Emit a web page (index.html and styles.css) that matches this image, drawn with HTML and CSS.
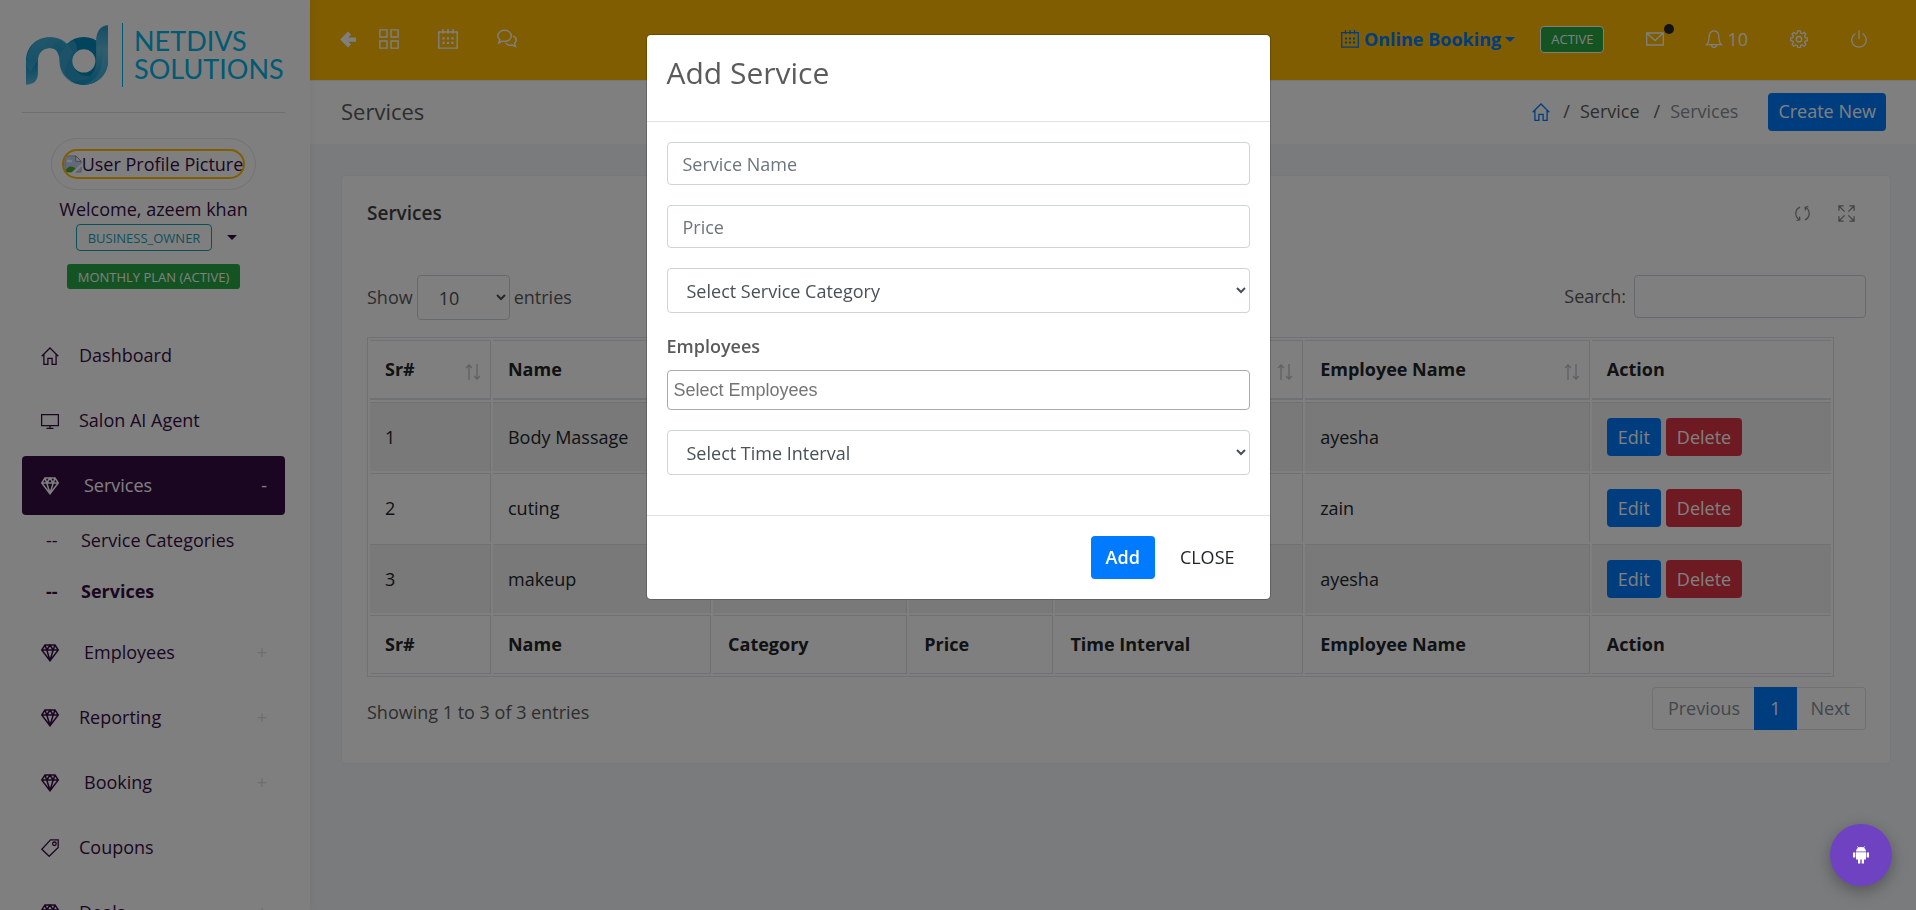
FILE: index.html
```html
<!DOCTYPE html>
<html lang="en">
<head>
<meta charset="utf-8">
<meta name="viewport" content="width=device-width, initial-scale=1">
<title>Services</title>
<link rel="stylesheet" href="styles.css">
</head>
<body>
<svg class="sprite" aria-hidden="true">
  <symbol id="i-home" viewBox="0 0 18 18"><path d="M.7 9.3 9 1l8.300 8.300M2.900 7.500v9.800h4v-6h4.200v6h4V7.500" /></symbol>
  <symbol id="i-desktop" viewBox="0 0 18 18"><path d="M.6 2.600h16.800v11H.6zM9 13.600v2.800M5.500 16.400h7" /></symbol>
  <symbol id="i-diamond" viewBox="0 0 18 18"><path d="M4 1h10l3.300 5L9 16.800.7 6zM.7 6h16.600M4 1l1.800 5L9 16.500 12.200 6 14 1M5.800 6 9 1l3.200 5" stroke-width="1.500" /></symbol>
  <symbol id="i-tag" viewBox="0 0 18 18"><path d="M9.500.8h7.700v7.700L8.200 17.300.8 10.300z" /><circle cx="13.400" cy="4.800" r="1.800" /></symbol>
  <symbol id="i-grid" viewBox="0 0 18 18"><path d="M.8.800h6.400v6.400H.8zM10.800.800h6.400v6.400h-6.400zM.8 10.800h6.400v6.400H.8zM10.800 10.800h6.400v6.400h-6.400z" /></symbol>
  <symbol id="i-calendar" viewBox="0 0 18 18"><path d="M.7 2.700h16.600v14.500H.7zM4.500 0v4.200M9 0v4.200M13.500 0v4.200" /><path d="M4 8.500h2M8 8.500h2M12 8.500h2M4 12.500h2M8 12.500h2M12 12.500h2" stroke-width="2" /></symbol>
  <symbol id="i-chat" viewBox="0 0 18 18"><path d="M6.800 1.200c3.400 0 6.100 2.200 6.100 5s-2.700 5-6.100 5c-.7 0-1.400-.1-2-.3L1.600 12.600l.9-3C1.300 8.700.700 7.500.700 6.200c0-2.800 2.700-5 6.100-5zM14.500 6.200c1.700.7 2.800 2.100 2.800 3.700 0 1.200-.5 2.200-1.500 3l.8 2.800-3-1.300c-2.300.5-4.600-.3-5.700-1.700" /></symbol>
  <symbol id="i-mail" viewBox="0 0 18 18"><path d="M.7 3h16.600v12H.7zM.9 3.200 9 10.500l8.100-7.300" /></symbol>
  <symbol id="i-bell" viewBox="0 0 18 18"><path d="M1.500 14.700c2.200-1.500 2.500-3.200 2.500-7C4 3.500 6 .800 9 .800s5 2.700 5 6.900c0 3.800.3 5.500 2.500 7zM6.500 15c0 1.500 1.100 2.400 2.500 2.400s2.500-.9 2.500-2.400" /></symbol>
  <symbol id="i-gear" viewBox="0 0 18 18"><path d="M7.700.800h2.600l.4 2.300 1.500.6 1.900-1.300 1.800 1.800-1.300 1.900.6 1.500 2.200.4v2.600l-2.200.4-.6 1.500 1.300 1.900-1.800 1.800-1.900-1.300-1.500.6-.4 2.200H7.700l-.4-2.200-1.500-.6-1.900 1.300-1.800-1.800 1.300-1.900-.6-1.500-2.200-.4V8l2.200-.4.6-1.500-1.300-1.900 1.800-1.800 1.900 1.300 1.500-.6z" /><circle cx="9" cy="9.200" r="2.700" /></symbol>
  <symbol id="i-power" viewBox="0 0 18 18"><path d="M5.500 3.500A7.300 7.300 0 1 0 12.500 3.500M9 .300V9" /></symbol>
  <symbol id="i-reload" viewBox="0 0 18 18"><path d="M6.500 2.300A7.200 7.200 0 0 0 5.800 15.400M11.500 15.700A7.200 7.200 0 0 0 12.200 2.600M2.800 16.200l3.400-.5-.4-3.400M15.200 1.800l-3.400.5.4 3.400" /></symbol>
  <symbol id="i-expand" viewBox="0 0 18 18"><path d="M1 6V1h5M1 1l6 6M12 1h5v5M17 1l-6 6M1 12v5h5M1 17l6-6M17 12v5h-5M17 17l-6-6" /></symbol>
  <symbol id="i-sort" viewBox="0 0 18 18"><path d="M5 17V2M2 5l3-3 3 3M13 1v15M10 13l3 3 3-3" /></symbol>
</svg>

<div class="layout">
  <aside class="sidebar">
    <a class="brand" href="#">
      <svg class="brand-mark" viewBox="0 0 84 62" aria-hidden="true">
        <defs>
          <linearGradient id="g1" x1="0" y1="0" x2="0" y2="1"><stop offset="0" stop-color="#2fa5d0"/><stop offset=".5" stop-color="#0090c4"/><stop offset="1" stop-color="#5cb9de"/></linearGradient>
          <linearGradient id="g2" x1="0" y1="0" x2="0" y2="1"><stop offset="0" stop-color="#2a9cc9"/><stop offset=".4" stop-color="#5fb8dc"/><stop offset="1" stop-color="#0e97c8"/></linearGradient>
        </defs>
        <path d="M0 61V37C0 23 10 13 24 13c9 0 15 4 19 9l-3 26c-4-4-6-9-6-13-1-7-4-11-10-11-7 0-12 5-12 13v12C12 57 8 61 0 61z" fill="url(#g1)"/>
        <path d="M0 38C2 22 12 13 24 13l10 2-9 9c-7 0-12 4-13 12l-7 11C2 45 0 42 0 38z" fill="#58b9df" opacity=".5"/>
        <circle cx="58.500" cy="37" r="18" fill="none" stroke="#0089bb" stroke-width="12.500"/>
        <path d="M24 13c13 0 19 6 23 15l-6 14c-2 5-3 8-1 11-5-5-6-11-6-18-1-7-4-11-10-11l-9 1z" fill="#3aa8d2" opacity=".55"/>
        <path d="M34 33c2-8 7-14 14-17 3 3 4 7 4 11-4 3-6 8-5 12 1 8 8 14 17 13l-3 9c-9 1-17-2-22-8-4-6-6-12-5-20z" fill="#54b3da" opacity=".5"/>
        <path d="M83 1v36c0 14-11 24-24 24-5 0-10-1-14-4 16 2 26-6 26-20V17C71 8 75 1 83 1z" fill="url(#g2)"/>
        <path d="M83 20v17c0 14-11 24-24 24 9-3 15-9 17-18 1-8 2-17 7-23z" fill="#68bde0" opacity=".5"/>
      </svg>
      <span class="brand-name">NETDIVS<br>SOLUTIONS</span>
    </a>
    <div class="profile">
      <div class="avatar-ring">
        <div class="avatar">
          <svg class="broken" viewBox="0 0 20 20" aria-hidden="true"><path d="M1 1h12l6 6v12H1z" fill="#c3d5f4" stroke="#a3a3a3"/><path d="M13 1v6h6z" fill="#fff" stroke="#888"/><path d="M3 7c0-2 3-3 4-1 2-1 3 2 1 2H3z" fill="#fff"/><path d="M1 19c2-7 8-8 12-4l-4 4z" fill="#4ba82e"/><path d="M8 20 20 9v3l-8 8z" fill="#fff"/></svg><span>User Profile Picture</span>
        </div>
      </div>
      <div class="welcome">Welcome, azeem khan</div>
      <div class="role"><button class="role-btn" type="button">BUSINESS_OWNER</button><span class="caret"></span></div>
      <button class="plan" type="button">MONTHLY PLAN (ACTIVE)</button>
    </div>
    <nav class="menu">
      <a class="item" href="#"><svg class="icon"><use href="#i-home"/></svg><span>Dashboard</span></a>
      <a class="item" href="#"><svg class="icon"><use href="#i-desktop"/></svg><span>Salon AI Agent</span></a>
      <a class="item active" href="#"><svg class="icon"><use href="#i-diamond"/></svg><span class="inset">Services</span><b class="toggle">-</b></a>
      <div class="submenu">
        <a class="sub" href="#"><i>--</i>Service Categories</a>
        <a class="sub current" href="#"><i>--</i>Services</a>
      </div>
      <a class="item" href="#"><svg class="icon"><use href="#i-diamond"/></svg><span class="inset">Employees</span><b class="toggle">+</b></a>
      <a class="item" href="#"><svg class="icon"><use href="#i-diamond"/></svg><span>Reporting</span><b class="toggle">+</b></a>
      <a class="item" href="#"><svg class="icon"><use href="#i-diamond"/></svg><span class="inset">Booking</span><b class="toggle">+</b></a>
      <a class="item" href="#"><svg class="icon"><use href="#i-tag"/></svg><span>Coupons</span></a>
      <a class="item" href="#"><svg class="icon"><use href="#i-diamond"/></svg><span>Deals</span><b class="toggle">+</b></a>
    </nav>
  </aside>

  <div class="main">
    <header class="topbar">
      <div class="shortcuts">
        <a href="#" aria-label="Back"><svg class="back" viewBox="0 0 16 16"><path d="M9 2 3 8l6 6M3 8h12" /></svg></a>
        <a href="#" aria-label="Apps"><svg class="icon"><use href="#i-grid"/></svg></a>
        <a href="#" aria-label="Calendar"><svg class="icon"><use href="#i-calendar"/></svg></a>
        <a href="#" aria-label="Chat"><svg class="icon"><use href="#i-chat"/></svg></a>
      </div>
      <div class="tools">
        <a class="booking" href="#"><svg class="icon"><use href="#i-calendar"/></svg>Online Booking<span class="caret"></span></a>
        <button class="status" type="button">ACTIVE</button>
        <a class="mail" href="#" aria-label="Messages"><svg class="icon"><use href="#i-mail"/></svg><span class="dot"></span></a>
        <a class="alerts" href="#"><svg class="icon"><use href="#i-bell"/></svg>10</a>
        <a class="tool" href="#" aria-label="Settings"><svg class="icon"><use href="#i-gear"/></svg></a>
        <a class="tool" href="#" aria-label="Log out"><svg class="icon"><use href="#i-power"/></svg></a>
      </div>
    </header>

    <div class="pagehead">
      <h1>Services</h1>
      <div class="crumbs">
        <a href="#" aria-label="Home"><svg class="icon"><use href="#i-home"/></svg></a><span>/</span><a class="crumb" href="#">Service</a><span>/</span><span class="here">Services</span>
        <button class="btn primary create" type="button">Create New</button>
      </div>
    </div>

    <section class="card">
      <div class="card-head">
        <h2>Services</h2>
        <div class="card-tools">
          <a href="#" aria-label="Reload"><svg class="icon"><use href="#i-reload"/></svg></a>
          <a href="#" aria-label="Fullscreen"><svg class="icon"><use href="#i-expand"/></svg></a>
        </div>
      </div>
      <div class="filters">
        <label class="length">Show <select class="control"><option>10</option></select> entries</label>
        <label class="search">Search: <input class="control" type="search"></label>
      </div>
      <div class="table-wrap">
        <table class="grid">
          <colgroup><col class="c1"><col class="c2"><col class="c3"><col class="c4"><col class="c5"><col class="c6"><col class="c7"></colgroup>
          <thead><tr>
            <th><div>Sr#<svg class="sort"><use href="#i-sort"/></svg></div></th>
            <th><div>Name<svg class="sort"><use href="#i-sort"/></svg></div></th>
            <th><div>Category<svg class="sort"><use href="#i-sort"/></svg></div></th>
            <th><div>Price<svg class="sort"><use href="#i-sort"/></svg></div></th>
            <th><div>Time Interval<svg class="sort"><use href="#i-sort"/></svg></div></th>
            <th><div>Employee Name<svg class="sort"><use href="#i-sort"/></svg></div></th>
            <th>Action</th>
          </tr></thead>
          <tbody>
            <tr><td>1</td><td>Body Massage</td><td></td><td></td><td></td><td>ayesha</td><td><div class="actions"><button class="btn primary" type="button">Edit</button><button class="btn danger" type="button">Delete</button></div></td></tr>
            <tr><td>2</td><td>cuting</td><td></td><td></td><td></td><td>zain</td><td><div class="actions"><button class="btn primary" type="button">Edit</button><button class="btn danger" type="button">Delete</button></div></td></tr>
            <tr><td>3</td><td>makeup</td><td></td><td></td><td></td><td>ayesha</td><td><div class="actions"><button class="btn primary" type="button">Edit</button><button class="btn danger" type="button">Delete</button></div></td></tr>
          </tbody>
          <tfoot><tr><th>Sr#</th><th>Name</th><th>Category</th><th>Price</th><th>Time Interval</th><th>Employee Name</th><th>Action</th></tr></tfoot>
        </table>
      </div>
      <div class="card-foot">
        <div class="info">Showing 1 to 3 of 3 entries</div>
        <div class="pager"><button type="button">Previous</button><button class="on" type="button">1</button><button type="button">Next</button></div>
      </div>
    </section>
  </div>
</div>

<div class="backdrop">
  <div class="modal" role="dialog" aria-labelledby="modal-title">
    <div class="modal-head"><h3 id="modal-title">Add Service</h3></div>
    <form class="modal-body">
      <input class="control" type="text" placeholder="Service Name" aria-label="Service Name">
      <input class="control" type="text" placeholder="Price" aria-label="Price">
      <select class="control" aria-label="Service Category"><option>Select Service Category</option></select>
      <div class="field"><label for="employees">Employees</label><input id="employees" class="picker" type="text" placeholder="Select Employees"></div>
      <select class="control" aria-label="Time Interval"><option>Select Time Interval</option></select>
    </form>
    <div class="modal-foot"><button class="add" type="button">Add</button><button class="close" type="button">CLOSE</button></div>
  </div>
</div>

<button class="fab" type="button" aria-label="Assistant">
  <svg viewBox="0 0 16 18" aria-hidden="true"><path d="M3 5.500a5 4.500 0 0 1 10 0zM3 6.200h10v7.300H3zM0 6.500h2.300v5H0zM13.700 6.500H16v5h-2.300zM5 13h2.300v4.500H5zM8.700 13H11v4.500H8.700z"/><path d="M4.500.500 6 2.500M11.500.500 10 2.500" stroke="#fff"/></svg>
</button>
</body>
</html>
```
FILE: styles.css
```css
* { box-sizing: border-box; }
body {
  margin: 0;
  background: #f5f7fb;
  color: #5b5b5b;
  font: 18px/27px "Open Sans", sans-serif;
  overflow: hidden;
}
a { color: inherit; text-decoration: none; }
button, input, select { font: inherit; }
h1, h2, h3 { margin: 0; font-weight: 400; }
.sprite { position: absolute; width: 0; height: 0; }
.icon, .sort { width: 18px; height: 18px; fill: none; stroke: currentColor; stroke-width: 1.3; flex: none; display: block; }
.caret { width: 0; height: 0; border: 5px solid transparent; border-top-color: currentColor; border-bottom: 0; }

.layout { display: flex; min-height: 100vh; }
.sidebar {
  width: 310px;
  height: 100vh;
  flex: none;
  padding: 22px 25px 0 22px;
  overflow: hidden;
  background: #fff;
  color: #370c45;
  box-shadow: 0 0 8px rgba(0, 0, 0, .08);
  z-index: 1;
}
.brand { display: flex; align-items: center; height: 91px; padding: 0 0 24px 4px; border-bottom: 1px solid #dedede; color: #00b4e6; }
.brand-mark { width: 83px; height: 62px; margin-right: 13px; flex: none; }
.brand-name { border-left: 1px solid #00b4e6; padding: 4px 0 4px 11px; font: 27px/28px Lato, sans-serif; }

.profile { display: flex; flex-direction: column; align-items: center; padding: 25px 0 37px; }
.avatar-ring { border: 1px solid #e4e4e4; border-radius: 26px; padding: 10px; }
.avatar { display: flex; align-items: center; height: 30px; border: 2px solid #ffba00; border-radius: 15px; overflow: hidden; white-space: nowrap; }
.broken { width: 18px; height: 20px; flex: none; }
.welcome { margin-top: 6px; }
.role { display: flex; align-items: center; gap: 15px; padding-left: 6px; margin-top: 1px; }
.role-btn { height: 27px; padding: 0 11px; border: 1px solid #17a2b8; border-radius: 4px; background: none; color: #17a2b8; font-size: 13px; line-height: 20px; }
.plan { height: 25px; margin-top: 13px; padding: 0 11px; border: 0; border-radius: 3px; background: #28a745; color: #fff; font-size: 13px; line-height: 20px; }

.menu { display: flex; flex-direction: column; gap: 6px; }
.item { display: flex; align-items: center; height: 59px; padding: 0 18px 0 19px; border-radius: 4px; flex: none; }
.item span { margin-left: 20px; }
.item .inset { margin-left: 25px; }
.item.active { background: #370c45; color: #fff; }
.toggle { margin-left: auto; color: #dcdcdc; font-weight: 400; }
.active .toggle { color: #fff; }
.submenu { margin-top: -6px; }
.sub { display: flex; align-items: center; height: 51px; padding-left: 24px; }
.sub i { width: 35px; font-style: normal; }
.current { font-weight: 700; }

.main { flex: 1; min-width: 0; }
.topbar { display: flex; justify-content: space-between; align-items: center; height: 80px; padding: 0 48px 2px 30px; background: #ffba00; color: #fff; }
.shortcuts, .tools { display: flex; align-items: center; }
.shortcuts { gap: 39px; }
.shortcuts .icon { width: 20px; height: 20px; }
.back { display: block; width: 17px; height: 17px; margin-right: -20px; fill: none; stroke: currentColor; stroke-width: 4; }
.booking { display: flex; align-items: center; color: #007bff; font-weight: 700; }
.booking .icon { margin-right: 5px; }
.booking .caret { margin-left: 4px; }
.status { height: 27px; margin: 0 42px 0 25px; padding: 0 10px; border: 1px solid #fff; border-radius: 4px; background: #28a745; color: #fff; font-size: 13px; line-height: 20px; }
.mail { position: relative; }
.dot { position: absolute; left: 18px; top: -6px; width: 10px; height: 10px; border-radius: 50%; background: #212529; }
.alerts { display: flex; align-items: center; gap: 4px; margin-left: 41px; }
.tool { margin-left: 42px; }

.pagehead { display: flex; justify-content: space-between; align-items: center; height: 64px; padding: 0 30px 2px 31px; background: #fff; border-top: 1px solid #eceef2; }
h1 { font-size: 22px; }
.crumbs { display: flex; align-items: center; gap: 10px; }
.crumbs > a:first-child { color: #007bff; margin-right: 3px; }
.crumb { margin-right: 4px; }
.here { color: #868e96; }
.btn { height: 38px; padding: 0 11px; border: 0; border-radius: 4px; color: #fff; }
.primary { background: #007bff; }
.danger { background: #dc3545; }
.create { margin-left: 20px; padding: 0 10px; }

.card { margin: 31px 25px 0 31px; padding: 24px 24px 33px 25px; background: #fff; border: 1px solid #eef0f4; border-radius: 4px; }
.card-head { display: flex; justify-content: space-between; align-items: center; height: 27px; }
h2 { color: #3f3f3f; font-size: 19px; font-weight: 600; }
.card-tools { display: flex; gap: 27px; padding-right: 11px; color: #888; }
.card-tools .icon { width: 17px; height: 17px; }
.filters { display: flex; justify-content: space-between; align-items: flex-start; margin-top: 48px; height: 62px; }
.filters label { display: flex; align-items: center; gap: 4px; }
.filters .search { gap: 8px; }
.control { width: 100%; height: 43px; padding: 0 15px; border: 1px solid #ced4da; border-radius: 4px; background: #fff; color: #495057; outline: 0; }
.control::placeholder { color: #6c757d; opacity: 1; }
select.control { height: 45px; }
.length .control { width: 93px; padding: 0 0 0 17px; }
.search .control { width: 232px; }

.table-wrap { padding-right: 32px; }
.grid { width: 100%; table-layout: fixed; border: 1px solid #dee2e6; border-collapse: separate; border-spacing: 2px; color: #212529; }
.c1 { width: 8.35%; } .c2 { width: 15.05%; } .c3 { width: 13.4%; } .c4 { width: 9.95%; } .c5 { width: 17.1%; } .c6 { width: 19.65%; } .c7 { width: 16.5%; }
.grid th, .grid td { padding: 15px; border: solid #dee2e6; border-width: 1px 1px 0 0; text-align: left; }
.grid th { font-weight: 700; }
.grid thead th { border-bottom-width: 2px; }
.grid tfoot th { border-bottom-width: 1px; }
.grid tr > :last-child { border-right-width: 0; }
.grid tbody tr:nth-child(odd) { background: #f2f2f2; }
.grid th div { display: flex; justify-content: space-between; align-items: center; }
.sort { color: #bfc1c3; margin: 4px -7px 0 0; }
.actions { display: flex; gap: 5px; }
.card-foot { display: flex; justify-content: space-between; align-items: center; margin-top: 10px; }
.info { padding-top: 8px; }
.pager { display: flex; }
.pager button { height: 43px; padding: 0 15px; border: 1px solid #dee2e6; background: #fff; color: #868e96; }
.pager button:first-child { padding-right: 14px; border-radius: 4px 0 0 4px; border-right: 0; }
.pager button:last-child { padding-left: 14px; border-radius: 0 4px 4px 0; border-left: 0; }
.pager .on { border-color: #007bff; background: #007bff; color: #fff; }

.backdrop { position: fixed; inset: 0; background: rgba(0, 0, 0, .5); z-index: 10; }
.modal { max-width: 625px; margin: 34px auto; background: #fff; background-clip: padding-box; border: 1px solid rgba(0, 0, 0, .2); border-radius: 5px; }
.modal-head { height: 87px; padding: 20px; border-bottom: 1px solid #dee2e6; }
h3 { font-size: 30px; line-height: 36px; }
.modal-body { display: flex; flex-direction: column; gap: 20px; padding: 20px 20px 40px; }
.modal-body select { padding: 0 0 0 15px; }
.field { display: flex; flex-direction: column; gap: 10px; }
.field label { font-weight: 600; }
.picker { width: 100%; height: 40px; padding: 0 6px; border: 1px solid #aaa; border-radius: 4px; font-family: "Liberation Sans", Arial, sans-serif; }
.picker::placeholder { color: #757575; opacity: 1; }
.modal-foot { display: flex; justify-content: flex-end; gap: 10px; padding: 20px; border-top: 1px solid #dee2e6; }
.modal-foot button { height: 43px; padding: 0 15px; border: 0; border-radius: 4px; }
.add { background: #007bff; color: #fff; font-weight: 600; }
.close { background: none; color: #212529; }

.fab { position: fixed; right: 24px; bottom: 24px; z-index: 11; display: flex; align-items: center; justify-content: center; width: 62px; height: 62px; border: 0; border-radius: 50%; background: #6f42c1; box-shadow: 0 5px 15px rgba(0, 0, 0, .3); }
.fab svg { width: 16px; height: 18px; fill: #fff; }
```
